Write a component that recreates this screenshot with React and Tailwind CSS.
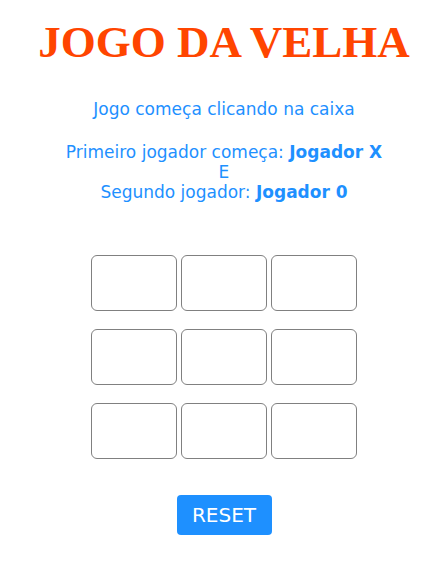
export default function App() {
  const cells = Array.from({ length: 9 });
  return (
    <div className="flex flex-col items-center bg-white min-h-screen pl-[5px]">
      <h1 className="mt-[16px] text-[45px] leading-[52px] font-bold text-[#ff4500] font-['Liberation_Serif',serif]">
        JOGO DA VELHA
      </h1>
      <div className="mt-[31px] text-center text-[17px] leading-[20px] text-[#1e90ff] font-['DejaVu_Sans',sans-serif]">
        <p>Jogo começa clicando na caixa</p>
        <p className="mt-[23px]">
          Primeiro jogador começa: <b>Jogador X</b>
        </p>
        <p>E</p>
        <p>
          Segundo jogador: <b>Jogador 0</b>
        </p>
      </div>
      <div className="mt-[53px] grid grid-cols-[86px_86px_86px] gap-x-[4px] gap-y-[18px]">
        {cells.map((_, i) => (
          <button
            key={i}
            className="h-[56px] w-[86px] rounded-[6px] border border-[#808080] bg-white"
          />
        ))}
      </div>
      <button className="mt-[36px] h-[40px] w-[95px] rounded-[4px] bg-[#1e90ff] text-white text-[20px] font-['DejaVu_Sans',sans-serif]">
        RESET
      </button>
    </div>
  );
}
